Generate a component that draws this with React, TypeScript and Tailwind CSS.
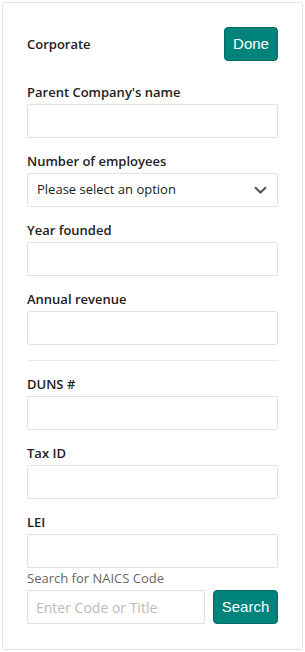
import React from "react";

function Label({ children }: { children: React.ReactNode }) {
  return (
    <div className="text-[13px] leading-[18px] font-semibold text-[#222] mb-[3px]">
      {children}
    </div>
  );
}

function Input({ className = "" }: { className?: string }) {
  return (
    <input
      type="text"
      className={
        "block w-full h-[34px] border border-[#e2e2e2] rounded-[2px] bg-white px-2 outline-none " +
        className
      }
    />
  );
}

function Field({ label, first = false }: { label: string; first?: boolean }) {
  return (
    <div className={first ? "" : "mt-[14px]"}>
      <Label>{label}</Label>
      <Input />
    </div>
  );
}

export default function App() {
  return (
    <div className="bg-white w-[305px] h-[652px] pt-[2px] pl-[2px]">
      <div className="w-[301px] h-[648px] border border-[#e3e3e3] rounded-[3px] px-6 pt-6 font-['Open_Sans',sans-serif] text-[#222]">
        <div className="flex items-center justify-between">
          <div className="text-[13px] font-semibold leading-[18px]">Corporate</div>
          <button className="w-[54px] h-[34px] rounded-[4px] bg-[#00837b] border border-[#006c65] text-white text-[15px] font-['Liberation_Sans',Arial,sans-serif]">
            Done
          </button>
        </div>

        <div className="mt-[22px]">
          <Field label="Parent Company's name" first />
          <div className="mt-[14px]">
            <Label>Number of employees</Label>
            <div className="flex items-center justify-between h-[34px] border border-[#e2e2e2] rounded-[2px] pl-[9px] pr-[10px]">
              <span className="text-[13px] text-[#222]">Please select an option</span>
              <svg width="13" height="8" viewBox="0 0 13 8" fill="none">
                <path d="M1 1.2 L6.5 6.5 L12 1.2" stroke="#555" strokeWidth="2" />
              </svg>
            </div>
          </div>
          <Field label="Year founded" />
          <Field label="Annual revenue" />
        </div>

        <div className="mt-[15px] h-px bg-[#e8e8e8]" />

        <div className="mt-[14px]">
          <Field label="DUNS #" first />
          <Field label="Tax ID" />
          <Field label="LEI" />
        </div>

        <div className="mt-px text-[13px] leading-[18px] text-[#666] mb-[3px]">
          Search for NAICS Code
        </div>
        <div className="flex gap-2">
          <input
            type="text"
            placeholder="Enter Code or Title"
            className="block flex-1 min-w-0 h-[34px] border border-[#e2e2e2] rounded-[2px] bg-white px-2 text-[14px] outline-none placeholder:text-[#bbbbbb]"
          />
          <button className="w-[65px] h-[34px] rounded-[4px] bg-[#00837b] border border-[#006c65] text-white text-[15px] font-['Liberation_Sans',Arial,sans-serif]">
            Search
          </button>
        </div>
      </div>
    </div>
  );
}
